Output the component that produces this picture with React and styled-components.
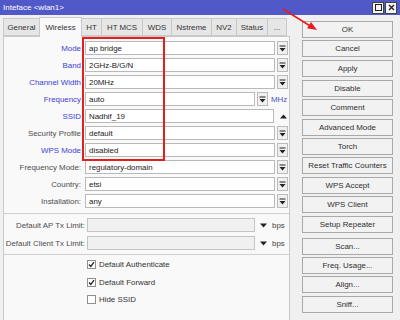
import React from "react";
import styled, { createGlobalStyle } from "styled-components";

const GlobalStyle = createGlobalStyle`
  body {
    margin: 0;
    background: #f0f0f0;
    font-family: "Liberation Sans", Arial, sans-serif;
    font-size: 7.9px;
    color: #333;
  }
`;

const Window = styled.div`
  position: relative;
  width: 400px;
  height: 320px;
  overflow: hidden;
  background: #f0f0f0;
  display: flex;
  flex-direction: column;
`;

const TitleBar = styled.div`
  height: 15px;
  flex-shrink: 0;
  background: #5159c8;
  color: #fff;
  display: flex;
  align-items: center;
  justify-content: space-between;
  padding: 0 3px;
  font-size: 8px;
`;

const TitleButtons = styled.div`
  display: flex;
  gap: 1px;
`;

const TitleButton = styled.span`
  width: 10px;
  height: 10px;
  background: #f4f4f4;
  border: 1px solid #444;
  display: flex;
  align-items: center;
  justify-content: center;
`;

const Body = styled.div`
  flex: 1;
  display: flex;
`;

const LeftPane = styled.div`
  width: 287px;
  padding-left: 3px;
  display: flex;
  flex-direction: column;
`;

const Tabs = styled.div`
  height: 21px;
  display: flex;
  align-items: flex-end;
  padding-left: 1px;
`;

const Tab = styled.div`
  width: ${(p) => p.$w}px;
  height: ${(p) => (p.$active ? 20 : 18)}px;
  box-sizing: border-box;
  display: flex;
  align-items: center;
  justify-content: center;
  background: ${(p) => (p.$active ? "#f9f9f9" : "#e6e6e6")};
  border: 1px solid #c9c9c9;
  border-bottom: ${(p) => (p.$active ? "none" : "1px solid #c9c9c9")};
  margin-left: -1px;
  color: #333;
  position: relative;
  z-index: ${(p) => (p.$active ? 1 : 0)};
  margin-bottom: ${(p) => (p.$active ? -1 : 0)}px;
`;

const Panel = styled.div`
  flex: 1;
  background: #f9f9f9;
  border: 1px solid #c9c9c9;
  border-bottom: none;
  padding-top: 4px;
  display: flex;
  flex-direction: column;
`;

const Row = styled.div`
  display: flex;
  align-items: center;
  height: 14px;
  margin-bottom: ${(p) => p.$mb ?? 3}px;
`;

const Label = styled.div`
  width: ${(p) => p.$w || 78}px;
  flex-shrink: 0;
  text-align: right;
  white-space: nowrap;
  padding-right: 1px;
  box-sizing: border-box;
  margin-right: ${(p) => (p.$w ? 1 : 3)}px;
  color: ${(p) => (p.$blue ? "#3b3fd6" : "#4d4d4d")};
  direction: rtl;
`;

const Field = styled.div`
  width: ${(p) => p.$w}px;
  height: 14px;
  box-sizing: border-box;
  background: ${(p) => (p.$disabled ? "#f0f0f0" : "#fff")};
  border: 1px solid ${(p) => (p.$disabled ? "#c4c4c4" : "#b9b9b9")};
  padding-left: 3px;
  display: flex;
  align-items: center;
  color: #222;
  white-space: nowrap;
`;

const DropButton = styled.div`
  width: 11px;
  height: 14px;
  box-sizing: border-box;
  margin-left: 2px;
  background: #f0f0f0;
  border: 1px solid #bbb;
  display: flex;
  align-items: center;
  justify-content: center;
`;

const PlainIcon = styled.div`
  width: 11px;
  height: 14px;
  margin-left: ${(p) => p.$ml || 2}px;
  display: flex;
  align-items: center;
  justify-content: center;
`;

const Unit = styled.span`
  margin-left: 3px;
  color: ${(p) => (p.$blue ? "#4a55b8" : "#444")};
`;

const Separator = styled.div`
  height: 1px;
  background: #cfcfcf;
  margin: ${(p) => p.$m};
`;

const CheckRow = styled.div`
  height: 17.5px;
  display: flex;
  align-items: center;
  padding-left: 83px;
  color: #333;
`;

const Box = styled.div`
  width: 9px;
  height: 9px;
  box-sizing: border-box;
  background: #fff;
  border: 1px solid #8f8f8f;
  margin-right: 3px;
  display: flex;
  align-items: center;
  justify-content: center;
`;

const RightPane = styled.div`
  margin-left: 12px;
  width: 91px;
  padding-top: 6px;
  display: flex;
  flex-direction: column;
`;

const Group = styled.div`
  display: flex;
  flex-direction: column;
  gap: 2.4px;
  margin-top: ${(p) => p.$mt || 0}px;
`;

const Button = styled.div`
  height: 17px;
  box-sizing: border-box;
  background: #f2f2f2;
  border: 1px solid #a9a9a9;
  display: flex;
  align-items: center;
  justify-content: center;
  color: #2e2e2e;
  white-space: nowrap;
`;

const RedBox = styled.div`
  position: absolute;
  left: 82px;
  top: 37px;
  width: 83px;
  height: 124px;
  box-sizing: border-box;
  border: 2px solid #e41d1d;
  pointer-events: none;
`;

const Overlay = styled.svg`
  position: absolute;
  left: 0;
  top: 0;
  pointer-events: none;
`;

const DropIcon = () => (
  <svg width="7" height="7" viewBox="0 0 7 7">
    <rect x="0.5" y="0.5" width="6" height="1" fill="#222" />
    <polygon points="0.5,3 6.5,3 3.5,6.5" fill="#222" />
  </svg>
);

const Down = () => (
  <svg width="7" height="5" viewBox="0 0 7 5">
    <polygon points="0,0.5 7,0.5 3.5,4.5" fill="#222" />
  </svg>
);

const Up = () => (
  <svg width="7" height="5" viewBox="0 0 7 5">
    <polygon points="0,4.5 7,4.5 3.5,0.5" fill="#222" />
  </svg>
);

const Tick = () => (
  <svg width="7" height="7" viewBox="0 0 7 7">
    <polyline points="1,3.5 2.8,5.5 6,1.2" fill="none" stroke="#222" strokeWidth="1.3" />
  </svg>
);

const tabs = [
  ["General", 37],
  ["Wireless", 43, true],
  ["HT", 21],
  ["HT MCS", 42],
  ["WDS", 30],
  ["Nstreme", 41],
  ["NV2", 26],
  ["Status", 32],
  ["...", 20],
];

const fields = [
  { label: "Mode", value: "ap bridge", blue: true },
  { label: "Band", value: "2GHz-B/G/N", blue: true },
  { label: "Channel Width", value: "20MHz", blue: true },
  { label: "Frequency", value: "auto", blue: true, unit: "MHz" },
  { label: "SSID", value: "Nadhif_19", blue: true, up: true },
  { label: "Security Profile", value: "default" },
  { label: "WPS Mode", value: "disabled", blue: true },
  { label: "Frequency Mode:", value: "regulatory-domain" },
  { label: "Country:", value: "etsi" },
  { label: "Installation:", value: "any" },
];

const buttonGroups = [
  { mt: 0, items: ["OK", "Cancel", "Apply"] },
  {
    mt: 3,
    items: [
      "Disable",
      "Comment",
      "Advanced Mode",
      "Torch",
      "Reset Traffic Counters",
      "WPS Accept",
      "WPS Client",
      "Setup Repeater",
    ],
  },
  { mt: 5, items: ["Scan...", "Freq. Usage...", "Align...", "Sniff..."] },
];

export default function App() {
  return (
    <>
      <GlobalStyle />
      <Window>
        <TitleBar>
          <span>Inteface &lt;wlan1&gt;</span>
          <TitleButtons>
            <TitleButton>
              <svg width="7" height="7" viewBox="0 0 7 7">
                <rect x="0.5" y="0.5" width="6" height="6" fill="none" stroke="#222" />
              </svg>
            </TitleButton>
            <TitleButton>
              <svg width="7" height="7" viewBox="0 0 7 7">
                <path d="M1 1 L6 6 M6 1 L1 6" stroke="#222" strokeWidth="1.4" />
              </svg>
            </TitleButton>
          </TitleButtons>
        </TitleBar>
        <Body>
          <LeftPane>
            <Tabs>
              {tabs.map(([name, w, active]) => (
                <Tab key={name} $w={w} $active={active}>
                  {name}
                </Tab>
              ))}
            </Tabs>
            <Panel>
              {fields.map((f) => (
                <Row key={f.label}>
                  <Label $blue={f.blue}>
                    <bdi>{f.label}</bdi>
                  </Label>
                  <Field $w={f.unit ? 170 : 190}>{f.value}</Field>
                  {f.up ? (
                    <PlainIcon $ml={4}>
                      <Up />
                    </PlainIcon>
                  ) : (
                    <DropButton>
                      <DropIcon />
                    </DropButton>
                  )}
                  {f.unit && <Unit $blue>{f.unit}</Unit>}
                </Row>
              ))}
              <Separator $m="2px 0 4px" />
              {["Default AP Tx Limit:", "Default Client Tx Limit:"].map((l) => (
                <Row key={l} $mb={4}>
                  <Label $w={82}>
                    <bdi>{l}</bdi>
                  </Label>
                  <Field $w={168} $disabled />
                  <PlainIcon $ml={3}>
                    <Down />
                  </PlainIcon>
                  <Unit>bps</Unit>
                </Row>
              ))}
              <Separator $m="0 0 1px" />
              <CheckRow>
                <Box>
                  <Tick />
                </Box>
                Default Authenticate
              </CheckRow>
              <CheckRow>
                <Box>
                  <Tick />
                </Box>
                Default Forward
              </CheckRow>
              <CheckRow>
                <Box />
                Hide SSID
              </CheckRow>
            </Panel>
          </LeftPane>
          <RightPane>
            {buttonGroups.map((g, i) => (
              <Group key={i} $mt={g.mt}>
                {g.items.map((b) => (
                  <Button key={b}>{b}</Button>
                ))}
              </Group>
            ))}
          </RightPane>
        </Body>
        <RedBox />
        <Overlay width="400" height="320" viewBox="0 0 400 320">
          <line x1="283" y1="9" x2="311" y2="26.5" stroke="#e41d1d" strokeWidth="1.6" />
          <polygon points="317,30 307,28.3 311,22" fill="#e41d1d" />
        </Overlay>
      </Window>
    </>
  );
}
